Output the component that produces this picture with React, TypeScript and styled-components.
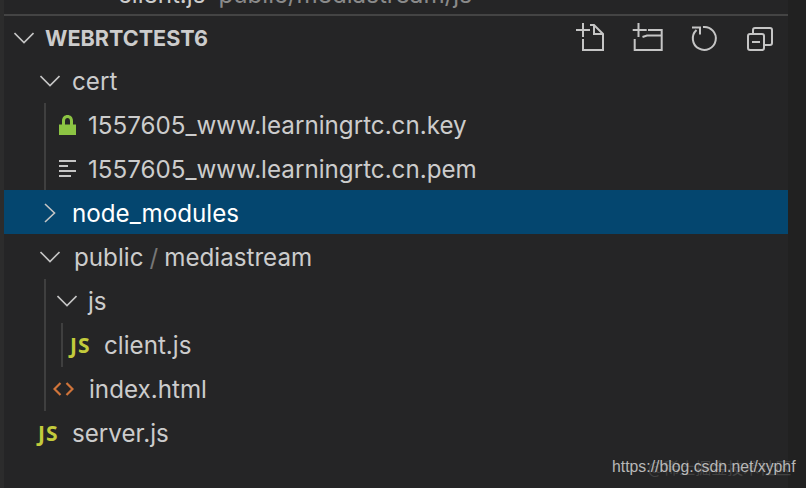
import React from 'react';
import styled, { createGlobalStyle } from 'styled-components';

const Global = createGlobalStyle`
  html, body { margin: 0; padding: 0; background: #252526; }
`;

const Window = styled.div`
  width: 806px;
  height: 488px;
  position: relative;
  overflow: hidden;
  display: flex;
  background: #252526;
  font-family: Inter, "Liberation Sans", sans-serif;
  color: #cccccc;
`;

const LeftEdge = styled.div`
  width: 4px;
  background: #2c2c2c;
`;

const RightEdge = styled.div`
  width: 18px;
  background: #212121;
`;

const Panel = styled.div`
  flex: 1;
  display: flex;
  flex-direction: column;
  min-width: 0;
`;

const OpenEditor = styled.div`
  height: 14px;
  flex: none;
  overflow: hidden;
  display: flex;
  align-items: flex-end;
  padding-left: 114px;
  gap: 13px;
  font-size: 24.2px;
  white-space: nowrap;
`;

const OpenEditorName = styled.span`
  line-height: 44px;
  margin-bottom: -3px;
`;

const OpenEditorPath = styled(OpenEditorName)`
  color: #8a8a8a;
`;

const Separator = styled.div`
  height: 2px;
  flex: none;
  background: #444444;
`;

const Header = styled.div`
  height: 43px;
  flex: none;
  display: flex;
  align-items: center;
  padding-left: 10px;
`;

const Title = styled.span`
  font-size: 21.6px;
  font-weight: 700;
  margin-left: 11px;
`;

const Actions = styled.div`
  margin-left: auto;
  display: flex;
  align-items: center;
  gap: 24px;
  padding-right: 13px;
`;

const Row = styled.div<{ $indent: number; $selected?: boolean }>`
  box-sizing: border-box;
  height: 44px;
  flex: none;
  display: flex;
  align-items: center;
  padding-left: ${({ $indent }) => $indent}px;
  font-size: 24.2px;
  white-space: nowrap;
  background: ${({ $selected }) => ($selected ? '#04466f' : 'transparent')};
  color: ${({ $selected }) => ($selected ? '#ffffff' : '#cccccc')};
  /* the highlight sits a pixel above the row grid */
  ${({ $selected }) => $selected && 'margin: -1px 0 1px; padding-top: 2px;'}
`;

const Label = styled.span<{ $gap: number }>`
  margin-left: ${({ $gap }) => $gap}px;
`;

const Slash = styled.span`
  color: #777777;
  margin: 0 6px;
`;

const Group = styled.div<{ $left: number }>`
  margin-left: ${({ $left }) => $left}px;
  border-left: 2px solid #3f3f3f;
  display: flex;
  flex-direction: column;
`;

const JsIcon = styled.span`
  width: 24px;
  font-family: "Open Sans", "Liberation Sans", sans-serif;
  font-size: 21px;
  font-weight: 700;
  letter-spacing: 1px;
  color: #c3cb3c;
`;

const Watermark = styled.div`
  position: absolute;
  left: 612px;
  top: 458px;
  font-family: "Liberation Sans", sans-serif;
  font-size: 15.8px;
  color: #b8b8b8;
  white-space: nowrap;
`;

const WatermarkGhost = styled.div`
  position: absolute;
  left: 648px;
  top: 455px;
  font-family: "Noto Sans CJK SC", sans-serif;
  font-size: 16px;
  color: #6e6e6e;
  opacity: 0.4;
  white-space: nowrap;
`;

const Chevron = ({ open }: { open: boolean }) => (
  <svg width="20" height="20" viewBox="0 0 20 20" fill="none" stroke="#c5c5c5" strokeWidth="1.6">
    {open ? <path d="M0.5 5L10 14.5L19.5 5" /> : <path d="M5 1L14.5 10L5 19" />}
  </svg>
);

const Lock = () => (
  <svg width="18" height="22" viewBox="0 0 18 22">
    <path
      fill="#8cc443"
      fillRule="evenodd"
      d="M0 10.500H3V7C3 3 5.500 1 8.500 1S14 3 14 7V10.500H17V21H0ZM6 10.500H11V7C11 5 10 4 8.500 4S6 5 6 7Z"
    />
  </svg>
);

const Lines = () => (
  <svg width="18" height="18" viewBox="0 0 18 18" stroke="#c5c5c5" strokeWidth="2">
    <path d="M0 1H17M0 6H9M0 11H17M0 16H12" />
  </svg>
);

const Angle = () => (
  <svg width="21" height="16" viewBox="0 0 21 16" fill="none" stroke="#d0743a" strokeWidth="2.200">
    <path d="M7.500 2L1.500 8L7.500 14M13.500 2L19.500 8L13.500 14" />
  </svg>
);

const Icon = ({ children }: { children: React.ReactNode }) => (
  <svg width="32" height="32" viewBox="0 0 32 32" fill="none" stroke="#c5c5c5" strokeWidth="2">
    {children}
  </svg>
);

export default function App() {
  return (
    <Window>
      <Global />
      <LeftEdge />
      <Panel>
        <OpenEditor>
          <OpenEditorName>client.js</OpenEditorName>
          <OpenEditorPath>public/mediastream/js</OpenEditorPath>
        </OpenEditor>
        <Separator />
        <Header>
          <Chevron open />
          <Title>WEBRTCTEST6</Title>
          <Actions>
            <Icon>
              <path d="M1 8H15M8 1V15M8 17V28H28V12L19 3H15M19 3V12H28" />
            </Icon>
            <Icon>
              <path d="M1.700 8H15.700M7.500 1V15M3.700 17V28H30.700V8H17M11.500 15L16 13.500H30.700" />
            </Icon>
            <Icon>
              <path d="M16 5A11.500 11.500 0 1 1 9.500 8M5 5.500H13V12.500" />
            </Icon>
            <Icon>
              <path d="M10 12V8A2 2 0 0 1 12 6H27A2 2 0 0 1 29 8V21A2 2 0 0 1 27 23H21" />
              <rect x="5" y="12" width="16" height="16" rx="2" />
              <path d="M9 20H17" />
            </Icon>
          </Actions>
        </Header>
        <Row $indent={36}>
          <Chevron open />
          <Label $gap={12}>cert</Label>
        </Row>
        <Group $left={40}>
          <Row $indent={13}>
            <Lock />
            <Label $gap={11}>1557605_www.learningrtc.cn.key</Label>
          </Row>
          <Row $indent={13}>
            <Lines />
            <Label $gap={11}>1557605_www.learningrtc.cn.pem</Label>
          </Row>
        </Group>
        <Row $indent={36} $selected>
          <Chevron open={false} />
          <Label $gap={12}>node_modules</Label>
        </Row>
        <Row $indent={36}>
          <Chevron open />
          <Label $gap={14}>
            public<Slash>/</Slash>mediastream
          </Label>
        </Row>
        <Group $left={40}>
          <Row $indent={11}>
            <Chevron open />
            <Label $gap={11}>js</Label>
          </Row>
          <Group $left={15}>
            <Row $indent={7}>
              <JsIcon>JS</JsIcon>
              <Label $gap={10}>client.js</Label>
            </Row>
          </Group>
          <Row $indent={7}>
            <Angle />
            <Label $gap={15}>index.html</Label>
          </Row>
        </Group>
        <Row $indent={34}>
          <JsIcon>JS</JsIcon>
          <Label $gap={10}>server.js</Label>
        </Row>
      </Panel>
      <RightEdge />
      <WatermarkGhost>@稀土掘金技术社区</WatermarkGhost>
      <Watermark>https://blog.csdn.net/xyphf</Watermark>
    </Window>
  );
}
